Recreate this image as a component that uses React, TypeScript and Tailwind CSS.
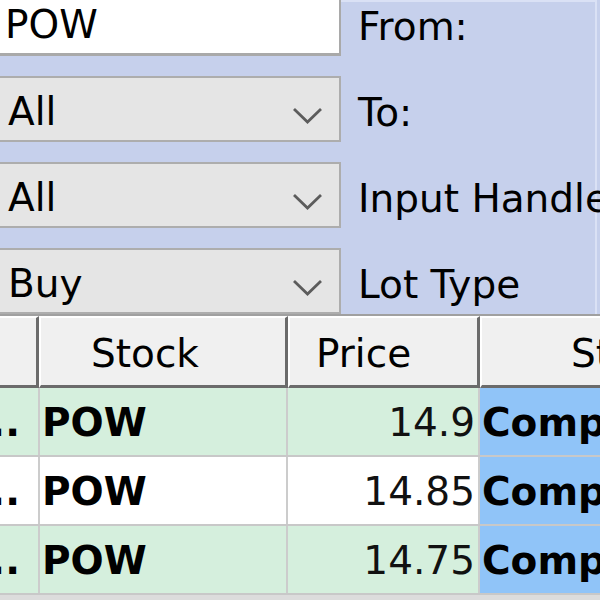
import React from "react";

function Chevron() {
  return (
    <svg width="31" height="18" viewBox="0 0 31 18" className="mt-[10px] shrink-0">
      <polyline points="2,2 15.5,15 29,2" fill="none" stroke="#5c5c5c" strokeWidth="2.8" />
    </svg>
  );
}

function Combo({ value }: { value: string }) {
  return (
    <div className="h-[66px] bg-[#e5e5e5] border-2 border-l-0 border-[#adadad] flex items-center justify-between pl-[8px] pr-[16px] pt-[4px]">
      <span>{value}</span>
      <Chevron />
    </div>
  );
}

const rows = [
  { bg: "bg-[#d5efdd]", price: "14.9" },
  { bg: "bg-white", price: "14.85" },
  { bg: "bg-[#d5efdd]", price: "14.75" },
];

export default function App() {
  return (
    <div className="w-[600px] h-[600px] overflow-hidden bg-[#c6d0ec] text-[39px] leading-none text-black font-['DejaVu_Sans',sans-serif] flex flex-col">
      <div className="flex h-[314px] shrink-0">
        <div className="w-[341px] shrink-0 flex flex-col gap-[20px]">
          <div className="h-[56px] bg-white border-r-2 border-b-[3px] border-[#a9a9a9] flex items-center pl-[5px] pb-[5px]">
            POW
          </div>
          <Combo value="All" />
          <Combo value="All" />
          <Combo value="Buy" />
        </div>
        <div className="flex-1 min-w-0 mr-[3px] border-r-2 border-t-2 border-[#dae1f5] flex flex-col gap-[20px] pl-[17px] whitespace-nowrap">
          <div className="h-[54px] flex items-center pb-[5px]">From:</div>
          <div className="h-[66px] flex items-center pt-[6px]">To:</div>
          <div className="h-[66px] flex items-center pt-[6px]">Input Handle</div>
          <div className="h-[66px] flex items-center pt-[6px]">Lot Type</div>
        </div>
      </div>

      <div className="flex-1 border-t-2 border-[#a0a0a0] bg-[#dcdcdc]">
        <div className="flex h-[72px] bg-[#f0f0f0]">
          <div className="w-[39px] shrink-0 border-t-2 border-t-white border-r-[3px] border-b-[3px] border-r-[#6b6b6b] border-b-[#6b6b6b]" />
          <div className="w-[249px] shrink-0 border-t-2 border-l-2 border-t-white border-l-white border-r-[3px] border-b-[3px] border-r-[#6b6b6b] border-b-[#6b6b6b] flex items-center pl-[50px] pt-[3px]">
            Stock
          </div>
          <div className="w-[192px] shrink-0 border-t-2 border-l-2 border-t-white border-l-white border-r-[3px] border-b-[3px] border-r-[#6b6b6b] border-b-[#6b6b6b] flex items-center pl-[26px] pt-[3px]">
            Price
          </div>
          <div className="flex-1 min-w-0 overflow-hidden whitespace-nowrap border-t-2 border-l-2 border-t-white border-l-white border-b-[3px] border-b-[#6b6b6b] flex items-center pl-[89px] pt-[3px]">
            Status
          </div>
        </div>
        {rows.map((r, i) => (
          <div key={i} className={`flex h-[69px] border-b-2 border-[#c8c8c8] ${r.bg}`}>
            <div className="w-[40px] shrink-0 border-r-2 border-[#cccccc] flex items-center justify-end pr-[18px] pt-[2px] font-bold overflow-hidden whitespace-nowrap">
              ...
            </div>
            <div className="w-[248px] shrink-0 border-r-2 border-[#cccccc] flex items-center pl-[2px] pt-[2px] font-bold">
              POW
            </div>
            <div className="w-[192px] shrink-0 border-r-2 border-[#cccccc] flex items-center justify-end pr-[3px] pt-[2px] text-[#111]">
              {r.price}
            </div>
            <div className="flex-1 min-w-0 bg-[#90c4f8] flex items-center pl-[2px] pt-[2px] font-bold overflow-hidden whitespace-nowrap">
              Completed
            </div>
          </div>
        ))}
      </div>
    </div>
  );
}
